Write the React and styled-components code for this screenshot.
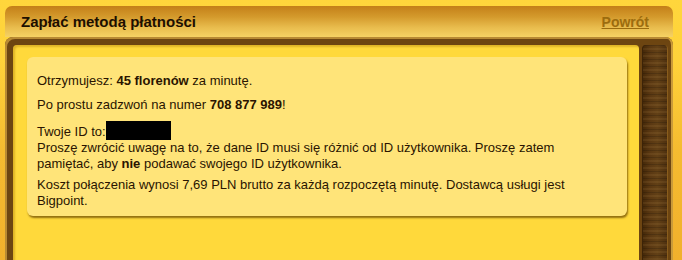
import { styled, createGlobalStyle } from 'styled-components';

const GlobalStyle = createGlobalStyle`
  html, body {
    margin: 0;
    padding: 0;
  }
  body {
    height: 260px;
    overflow: hidden;
    font-family: "Liberation Sans", Arial, sans-serif;
    background: linear-gradient(180deg, #ffd63c 0px, #ffd23a 60px, #f5bb30 150px, #f1b02c 260px);
  }
`;

const App = () => {
  return (
    <>
      <GlobalStyle />
      <Page>
        <Header>
          <Title>Zapłać metodą płatności</Title>
          <BackLink href="#">Powrót</BackLink>
        </Header>

        <Frame>
          <Inner>
            <Card>
              <Para>
                Otrzymujesz: <b>45 florenów</b> za minutę.
              </Para>
              <Para>
                Po prostu zadzwoń na numer <b>708 877 989</b>!
              </Para>
              <Para>
                Twoje ID to:<Redacted />
                <br />
                Proszę zwrócić uwagę na to, że dane ID musi się różnić od ID użytkownika. Proszę zatem
                pamiętać, aby <b>nie</b> podawać swojego ID użytkownika.
              </Para>
              <Para $gap={5}>
                Koszt połączenia wynosi 7,69 PLN brutto za każdą rozpoczętą minutę. Dostawcą usługi jest
                Bigpoint.
              </Para>
            </Card>
          </Inner>
          <Wood />
        </Frame>
      </Page>
    </>
  );
};

const Page = styled.div`
  padding: 6px 9px 0 5px;
`;

const Header = styled.div`
  height: 31px;
  display: flex;
  justify-content: space-between;
  align-items: center;
  padding: 0 24px 0 16px;
  border-radius: 7px 7px 0 0;
  background: linear-gradient(180deg, #c47f18 0%, #d49a2c 35%, #e9bd4e 70%, #f6d264 100%);
`;

const Title = styled.h1`
  margin: 0;
  font-size: 15px;
  font-weight: bold;
  color: #1d0f00;
`;

const BackLink = styled.a`
  font-size: 14px;
  font-weight: bold;
  color: #9c6c0e;
  text-decoration: underline;
`;

const Frame = styled.div`
  display: flex;
  height: 223px;
  box-sizing: border-box;
  padding: 8px 5px 0 8px;
  border-radius: 8px 8px 0 0;
  background: #6d4511;
  box-shadow: inset 2px 2px 0 #b88a34, inset -2px 0 0 #c99a3a;
`;

const Inner = styled.div`
  flex: 1;
  padding: 12px 12px 0 14px;
  background: #ffd93b;
  border-radius: 4px 4px 0 0;
  box-shadow: inset 2px 2px 2px rgba(160, 110, 0, 0.35);
`;

const Wood = styled.div`
  width: 24px;
  margin-left: 3px;
  border-radius: 4px 4px 0 0;
  border-left: 1px solid #3c2307;
  border-right: 1px solid #8a5d1c;
  background-color: #573612;
  background-image:
    repeating-linear-gradient(180deg, rgba(0, 0, 0, 0.16) 0px, rgba(0, 0, 0, 0.16) 1px, transparent 1px, transparent 3px, rgba(255, 200, 120, 0.08) 3px, rgba(255, 200, 120, 0.08) 5px, transparent 5px, transparent 7px),
    linear-gradient(90deg, #452909 0%, #5a3812 30%, #624016 60%, #4e300f 100%);
`;

const Card = styled.div`
  padding: 16px 22px 7px 10px;
  background: #ffe479;
  border-radius: 6px;
  box-shadow: 1px 2px 2px rgba(110, 75, 0, 0.75);
  color: #2a1400;
  font-size: 13px;
  line-height: 16px;
`;

const Para = styled.p`
  margin: ${(p) => (p.$gap != null ? p.$gap : 8)}px 0 0;

  &:first-child {
    margin-top: 0;
  }

  b {
    font-weight: bold;
  }
`;

const Redacted = styled.span`
  display: inline-block;
  width: 65px;
  height: 19px;
  background: #000;
  vertical-align: -4px;
`;

export default App;
